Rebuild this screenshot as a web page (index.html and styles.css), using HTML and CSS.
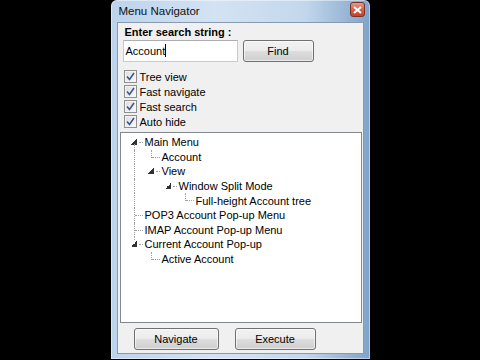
FILE: index.html
```html
<!DOCTYPE html>
<html lang="en">
<head>
  <meta charset="UTF-8" />
  <title>Menu Navigator</title>
  <link rel="stylesheet" href="styles.css">
</head>
<body>

<div class="window">
  <div class="titlebar">
    <span class="title">Menu Navigator</span>
    <span class="close">
      <svg width="9" height="8" viewBox="0 0 9 8"><path d="M1 1 L8 7 M8 1 L1 7" stroke="#fff" stroke-width="2"/></svg>
    </span>
  </div>

  <div class="client">
    <div class="search">
      <div class="search-label">Enter search string :</div>
      <div class="search-row">
        <div class="textbox">Account<span class="caret"></span></div>
        <button class="btn find">Find</button>
      </div>
    </div>

    <!-- options -->
    <div class="options">
      <div class="option"><span class="check"><svg width="9" height="9" viewBox="0 0 9 9"><path d="M1 4.5 L3.5 7.5 L8 1" fill="none" stroke="#3c5590" stroke-width="1.6"/></svg></span>Tree view</div>
      <div class="option"><span class="check"><svg width="9" height="9" viewBox="0 0 9 9"><path d="M1 4.5 L3.5 7.5 L8 1" fill="none" stroke="#3c5590" stroke-width="1.6"/></svg></span>Fast navigate</div>
      <div class="option"><span class="check"><svg width="9" height="9" viewBox="0 0 9 9"><path d="M1 4.5 L3.5 7.5 L8 1" fill="none" stroke="#3c5590" stroke-width="1.6"/></svg></span>Fast search</div>
      <div class="option"><span class="check"><svg width="9" height="9" viewBox="0 0 9 9"><path d="M1 4.5 L3.5 7.5 L8 1" fill="none" stroke="#3c5590" stroke-width="1.6"/></svg></span>Auto hide</div>
    </div>

    <!-- tree -->
    <div class="tree">
      <div class="row"><span class="cell exp first"></span><span class="label">Main Menu</span></div>
      <div class="row"><span class="cell line"></span><span class="cell end"></span><span class="label">Account</span></div>
      <div class="row"><span class="cell line"></span><span class="cell exp"></span><span class="label">View</span></div>
      <div class="row"><span class="cell line"></span><span class="cell"></span><span class="cell exp"></span><span class="label">Window Split Mode</span></div>
      <div class="row"><span class="cell line"></span><span class="cell"></span><span class="cell"></span><span class="cell end"></span><span class="label">Full-height Account tree</span></div>
      <div class="row"><span class="cell tee"></span><span class="label">POP3 Account Pop-up Menu</span></div>
      <div class="row"><span class="cell tee"></span><span class="label">IMAP Account Pop-up Menu</span></div>
      <div class="row"><span class="cell exp last"></span><span class="label">Current Account Pop-up</span></div>
      <div class="row"><span class="cell"></span><span class="cell end"></span><span class="label">Active Account</span></div>
    </div>

    <div class="actions">
      <button class="btn navigate">Navigate</button>
      <button class="btn execute">Execute</button>
    </div>
  </div>
</div>

</body>
</html>
```

FILE: styles.css
```css
* { box-sizing: border-box; margin: 0; padding: 0; }
body {
  background: #000;
  height: 360px;
  display: flex;
  justify-content: center;
  font-family: 'Liberation Sans', Arial, sans-serif;
  font-size: 11px;
  color: #000;
}

.window {
  width: 259px;
  height: 359px;
  display: flex;
  flex-direction: column;
  padding: 0 6px 5px 6px;
  border-radius: 6px 6px 0 0;
  background: linear-gradient(to right, #bcd3ec 0%, #d3e3f3 40%, #c3d7ec 75%, #7fa3c9 100%);
  box-shadow: inset 0 0 0 1px rgba(255,255,255,0.45);
}

.titlebar {
  height: 22px;
  display: flex;
  align-items: center;
  justify-content: space-between;
}

.title {
  font-family: 'Liberation Sans', Arial, sans-serif;
  font-size: 11.5px;
  color: #111;
  padding-left: 2px;
  padding-bottom: 1px;
}

.close {
  width: 15px;
  height: 15px;
  margin-right: -1px;
  margin-bottom: 3px;
  border: 1px solid #7a3328;
  border-radius: 3px;
  background: linear-gradient(#e99a86, #d5634a 50%, #c4422c);
  display: flex;
  align-items: center;
  justify-content: center;
}

.client {
  flex: 1;
  display: flex;
  flex-direction: column;
  background: #f0f0f0;
  border: 1px solid #8a9aae;
}

.search { padding: 2px 0 0 5px; }
.search-label { font-weight: bold; line-height: 14px; padding-left: 2px; }

.search-row {
  display: flex;
  gap: 5px;
  margin-top: 1px;
}

.textbox {
  width: 115px;
  height: 22px;
  background: #fff;
  border: 1px solid #c5cbd3;
  border-top-color: #abadb3;
  padding: 3px 2px;
  line-height: 14px;
}

.caret {
  display: inline-block;
  width: 1px;
  height: 13px;
  background: #000;
  vertical-align: -2px;
}

.btn {
  height: 22px;
  font-family: 'Liberation Sans', Arial, sans-serif;
  font-size: 11px;
  color: #000;
  border: 1px solid #707070;
  border-radius: 3px;
  background: linear-gradient(#f2f2f2, #ebebeb 50%, #dddddd 51%, #cfcfcf);
  box-shadow: inset 0 0 0 1px rgba(255,255,255,0.6);
}

.find { width: 71px; }

.options { padding: 7px 0 0 6px; }

.option {
  height: 15px;
  display: flex;
  align-items: center;
  gap: 3px;
}

.check {
  width: 13px;
  height: 13px;
  border: 1px solid #8e8f8f;
  background: linear-gradient(135deg, #dcdcdc, #fbfbfb);
  box-shadow: inset 0 0 0 1px #f4f4f4;
  display: flex;
  align-items: center;
  justify-content: center;
}

.tree {
  flex: 1;
  margin: 3px 1px 0 2px;
  padding: 2px 0 0 5px;
  background: #fff;
  border: 1px solid #828790;
}

.row {
  height: 14.6px;
  display: flex;
  align-items: center;
}

.cell {
  position: relative;
  width: 17px;
  height: 100%;
  flex: none;
}

.label { padding-left: 2px; white-space: nowrap; }

/* tree connectors */
.line::before, .tee::before, .end::before,
.first::before, .last::before {
  content: "";
  position: absolute;
  left: 8px;
  border-left: 1px dotted #a0a0a0;
}
.line::before, .tee::before { top: 0; bottom: 0; }
.end::before { top: 0; height: 8px; }
.first::before { top: 9px; bottom: 0; }
.last::before { top: 0; height: 3px; }

.tee::after, .end::after, .exp::after {
  content: "";
  position: absolute;
  top: 7px;
  right: 0;
  border-top: 1px dotted #a0a0a0;
}
.tee::after, .end::after { left: 9px; }
.exp::after { left: 13px; }

.exp {
  background:
    linear-gradient(135deg, transparent 50%, #333 50%) 5px 4px / 6px 6px no-repeat;
}

.actions {
  display: flex;
  gap: 16px;
  padding-left: 16px;
  margin: 5px 0 3px;
}

.navigate { width: 85px; }
.execute { width: 81px; }
```
